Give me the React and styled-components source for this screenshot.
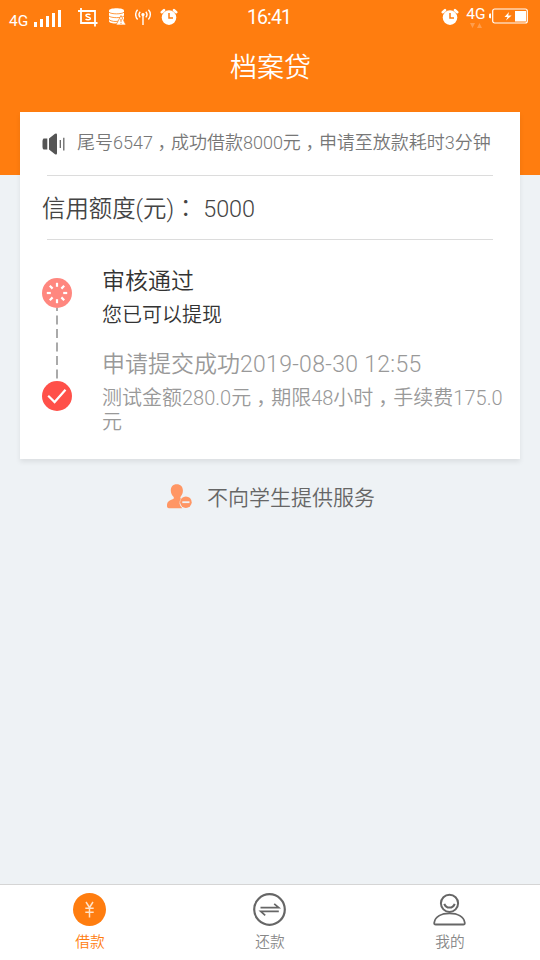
import React from 'react'
import styled, { createGlobalStyle } from 'styled-components'

const GlobalStyle = createGlobalStyle`
  * {
    box-sizing: border-box;
  }
  body {
    margin: 0;
    background: #eef2f5;
    font-family: Roboto, 'Noto Sans CJK SC', sans-serif;
    font-weight: 350;
  }
  svg {
    display: block;
    flex-shrink: 0;
  }
`

const AlarmIcon = () => (
  <svg width='18' height='18' viewBox='0 0 18 18'>
    <circle cx='9' cy='9.6' r='7.3' fill='#fff' />
    <path d='M1.800 4.200 4 2.200M16.200 4.200 14 2.200' stroke='#fff' strokeWidth='2.600' strokeLinecap='round' />
    <path d='M9 5v5h4' fill='none' stroke='#ff7d0f' strokeWidth='1.5' />
  </svg>
)

const SignalIcon = () => (
  <svg width='28' height='18' viewBox='0 0 28 18' fill='#fff'>
    <path d='M0 13h3v5H0zM6 10h3v8H6zM12 7h3v11h-3zM18 4h3v14h-3zM24 1h3v17h-3z' />
  </svg>
)

const CropIcon = () => (
  <svg width='20' height='19' viewBox='0 0 20 19' fill='none' stroke='#fff' strokeWidth='1.8'>
    <path d='M3 0v15H19.500M0 3h17v15.500' />
    <path d='M12.300 6.800c-.7-.8-4.4-1-4.400.7 0 1.900 4.500 1 4.500 3 0 1.700-3.900 1.600-4.800.5' strokeWidth='1.5' />
  </svg>
)

const DatabaseIcon = () => (
  <svg width='17' height='17' viewBox='0 0 17 17'>
    <path d='M0 2.6C0-.6 15-.6 15 2.6v10.6c0 3.2-15 3.2-15 0z' fill='#fff' />
    <path d='M0 4.2c2 2.2 13 2.2 15 0M0 8c2 2.2 13 2.2 15 0M0 11.6c2 2 7 2.2 9 1.6' fill='none' stroke='#ff7d0f' strokeWidth='.8' />
    <path d='M12 7.5 17 17H7z' fill='#fff' stroke='#ff7d0f' strokeWidth='.7' />
    <path d='M12 10.8v3M12 14.8v1' stroke='#ff7d0f' />
  </svg>
)

const AntennaIcon = () => (
  <svg width='17' height='17' viewBox='0 0 17 17' fill='none' stroke='#fff' strokeWidth='1.4'>
    <path d='M8 7v10M5.200 3.800c-1.4 1.600-1.400 4 0 5.600M10.800 3.800c1.400 1.600 1.400 4 0 5.600M2.600 1.800c-2.600 2.600-2.600 7 0 9.600M13.400 1.800c2.600 2.600 2.600 7 0 9.600' />
    <circle cx='8' cy='6.600' r='1' fill='#fff' />
  </svg>
)

const BatteryIcon = () => (
  <svg width='39' height='16' viewBox='0 0 39 16'>
    <rect x='3.700' y='1' width='34.600' height='14' rx='2' fill='none' stroke='#fff' strokeWidth='1.2' />
    <path d='M2 5.4H1.2Q0 5.4 0 6.6V9q0 1.2 1.2 1.2H2z' fill='#fff' />
    <path d='M26 3h11v10.500H26zM20 4l-4.500 5h3L17 12.500l5.600-5.100h-3.400z' fill='#fff' />
  </svg>
)

const SpeakerIcon = () => (
  <svg width='23' height='22' viewBox='0 0 23 22' fill='#555'>
    <path d='M1.500 5.500h3.800v11H1.500q-1-1-1-2.500V8q0-1.500 1-2.500zM7 5.600 13 .8q2-1 2 1v18.400q0 2-2 1l-6-4.800z' />
    <path d='M18.300 7v8M21.800 4.800v12.600' stroke='#666' strokeWidth='1.300' />
  </svg>
)

const LoadingIcon = () => (
  <svg width='30' height='30' viewBox='0 0 30 30'>
    <circle cx='15' cy='15' r='15' fill='#ff877f' />
    <g stroke='#fff' strokeWidth='2.200'>
      {[0, 45, 90, 135, 180, 225, 270, 315].map((angle) => (
        <path key={angle} d='M15 4.800v4' transform={`rotate(${angle} 15 15)`} />
      ))}
    </g>
  </svg>
)

const CheckIcon = () => (
  <svg width='30' height='30' viewBox='0 0 30 30'>
    <circle cx='15' cy='15' r='15' fill='#ff5049' />
    <path d='m6.200 14.700 6.400 6.400L23.500 8.800' fill='none' stroke='#fff' strokeWidth='2.200' />
  </svg>
)

const BlockedUserIcon = () => (
  <svg width='25' height='25' viewBox='0 0 25 25'>
    <path
      d='M9.700.2C5.800.2 3.700 2.800 3.800 6.500c.1 2.700 1 4.800 2.700 6.200.9 1.400.3 2-1.500 2.900-3.500 1.500-5 2.500-5 6.400 0 1.500.6 2 2 2.300h13.400a6.600 6.600 0 0 1-1.500-9.500c-.8-.8-.7-1.600 0-2.500 1.300-1.500 2-3.300 2-5.800C15.900 2.500 13.600.2 9.700.2z'
      fill='#ff9664'
    />
    <circle cx='18.900' cy='18.200' r='5.800' fill='#ff9664' />
    <path d='M15.300 18.200h7.200' stroke='#eef2f5' strokeWidth='1.800' />
  </svg>
)

const LoanIcon = () => (
  <svg width='33' height='33' viewBox='0 0 33 33'>
    <circle cx='16.500' cy='16.500' r='16.500' fill='#ff7d0f' />
    <path d='m13 9 3.500 5.500L20 9M16.500 14.500v10M12.300 15.200h8.400M12.300 19.300h8.400' fill='none' stroke='#ffe3c8' strokeWidth='1.500' />
  </svg>
)

const RepayIcon = () => (
  <svg width='33' height='33' viewBox='0 0 33 33' fill='none' stroke='#666'>
    <circle cx='16.500' cy='16.500' r='15.300' strokeWidth='2.200' />
    <path d='M7.500 14.700h18.300l-4.600-3.900M25.800 18.400H7.700l4.500 4' strokeWidth='1.700' />
  </svg>
)

const MineIcon = () => (
  <svg width='33' height='33' viewBox='0 0 33 33' fill='none' stroke='#666' strokeWidth='2'>
    <circle cx='16.500' cy='10.300' r='8.600' />
    <path d='M11.300 10.800c1.800 5 8.600 5 10.400 0' />
    <path d='M1.200 29.800c1-6.200 7.200-9.400 15.300-9.400s14.300 3.200 15.300 9.400q.2 1.700-1.500 1.700H2.700q-1.700 0-1.500-1.700z' strokeWidth='1.800' />
  </svg>
)

const tabs = [
  { label: '借款', icon: <LoanIcon />, active: true },
  { label: '还款', icon: <RepayIcon /> },
  { label: '我的', icon: <MineIcon /> },
]

const App = () => {
  return (
    <Screen>
      <GlobalStyle />
      <Header>
        <StatusBar>
          <Carrier>
            <span className='network'>4G</span>
            <SignalIcon />
          </Carrier>
          <Notifications>
            <CropIcon />
            <DatabaseIcon />
            <AntennaIcon />
            <AlarmIcon />
          </Notifications>
          <Clock>16:41</Clock>
          <Indicators>
            <AlarmIcon />
            <DataNetwork>
              4G
              <svg width='12' height='5' viewBox='0 0 12 5' fill='#ff9d4d'>
                <path d='M0 0h5L2.500 5zM7 5h5L9.500 0z' />
              </svg>
            </DataNetwork>
            <BatteryIcon />
          </Indicators>
        </StatusBar>
        <Title>档案贷</Title>
      </Header>
      <Card>
        <Notice>
          <SpeakerIcon />
          <span>
            尾号6547<Comma>，</Comma>成功借款8000元<Comma>，</Comma>申请至放款耗时3分钟
          </span>
        </Notice>
        <Credit>
          信用额度(元)<Colon>：</Colon> 5000
        </Credit>
        <Progress>
          <Rail>
            <LoadingIcon />
            <Dashes width='2' height='73' viewBox='0 0 2 73'>
              <path d='M1 0v73' stroke='#aaa' strokeWidth='2' strokeDasharray='9 4.500' strokeDashoffset='6' />
            </Dashes>
            <CheckIcon />
          </Rail>
          <Steps>
            <Step>
              <h3>审核通过</h3>
              <p>您已可以提现</p>
            </Step>
            <Step $muted>
              <h3>
                申请提交成功<time>2019-08-30 12:55</time>
              </h3>
              <p>
                测试金额280.0元<Comma>，</Comma>期限48小时<Comma>，</Comma>手续费175.0元
              </p>
            </Step>
          </Steps>
        </Progress>
      </Card>
      <Restriction>
        <BlockedUserIcon />
        <span>不向学生提供服务</span>
      </Restriction>
      <TabBar>
        {tabs.map(({ label, icon, active }) => {
          return (
            <Tab key={label} $active={active}>
              {icon}
              {label}
            </Tab>
          )
        })}
      </TabBar>
    </Screen>
  )
}

const Screen = styled.div`
  display: flex;
  flex-direction: column;
  width: 540px;
  height: 960px;
  overflow: hidden;
  background: #eef2f5;
`
const Header = styled.header`
  flex: none;
  height: 175px;
  background: #ff7d0f;
  color: #fff;
`
const StatusBar = styled.div`
  display: flex;
  height: 36px;
`
const Carrier = styled.div`
  display: flex;
  align-items: flex-start;
  width: 78px;
  padding: 9px 0 0 9px;
  .network {
    width: 25px;
    padding-top: 4px;
    font-size: 15.5px;
    font-weight: 400;
    line-height: 17px;
  }
`
const Notifications = styled.div`
  display: flex;
  align-items: flex-start;
  gap: 9px;
  width: 169px;
  padding-top: 8px;
  svg:first-child {
    margin-right: 2px;
  }
  svg:last-child {
    margin-left: -1px;
  }
`
const Clock = styled.div`
  width: 194px;
  padding-top: 7px;
  font-size: 19.5px;
  font-weight: 400;
  line-height: 22px;
  letter-spacing: -0.9px;
`
const Indicators = styled.div`
  display: flex;
  align-items: flex-start;
  padding-top: 8px;
`
const DataNetwork = styled.div`
  display: flex;
  flex-direction: column;
  align-items: center;
  width: 20px;
  margin: -3px 3px 0 7px;
  font-size: 15.5px;
  font-weight: 400;
  line-height: 18px;
`
const Title = styled.h1`
  margin: 0;
  padding: 12px 0 0 1px;
  font-size: 27px;
  font-weight: 350;
  line-height: 40px;
  text-align: center;
`
const Card = styled.main`
  flex: none;
  height: 347px;
  margin: -63px 20px 0;
  padding: 0 14px 0 22px;
  background: #fff;
  box-shadow: 0 3px 5px rgba(0, 0, 0, 0.08);
`
const Notice = styled.div`
  display: flex;
  align-items: center;
  gap: 12px;
  height: 63px;
  color: #777;
  font-size: 18px;
  white-space: nowrap;
  > span {
    padding-bottom: 1px;
    line-height: 26px;
  }
`
const Credit = styled.div`
  height: 65px;
  margin: 0 13px 0 5px;
  border: solid #dcdcdc;
  border-width: 1px 0;
  color: #444;
  font-size: 23.4px;
  line-height: 62px;
  text-indent: -5px;
`
/* half-width comma centred in a full-width cell */
const Comma = styled.span`
  padding: 0 0.25em;
  font-feature-settings: 'halt';
`
const Colon = styled.span`
  font-family: 'Noto Sans CJK TC', sans-serif;
`
const Progress = styled.div`
  display: flex;
  gap: 30px;
`
const Rail = styled.div`
  display: flex;
  flex-direction: column;
  align-items: center;
  width: 30px;
  padding-top: 38px;
`
const Dashes = styled.svg`
  margin-right: 1px;
`
const Steps = styled.div`
  flex: 1;
  padding-top: 25px;
`
const Step = styled.section`
  margin-bottom: 21px;
  color: ${({ $muted }) => ($muted ? '#999' : '#333')};
  h3,
  p {
    margin: 0;
    font-weight: 350;
  }
  h3 {
    font-size: 23px;
    line-height: 34px;
  }
  time {
    letter-spacing: 0.3px;
  }
  p {
    padding-top: 4px;
    font-size: 20px;
    line-height: 24px;
  }
`
const Restriction = styled.div`
  display: flex;
  align-items: center;
  justify-content: center;
  gap: 15px;
  height: 36px;
  margin-top: 19px;
  padding-left: 2px;
  color: #666;
  font-size: 21px;
  svg {
    margin-top: 1px;
  }
`
const TabBar = styled.nav`
  display: grid;
  grid-template-columns: repeat(3, 1fr);
  flex: none;
  height: 76px;
  margin-top: auto;
  border-top: 1px solid #d5d5d5;
  background: #fff;
`
const Tab = styled.div`
  display: flex;
  flex-direction: column;
  align-items: center;
  padding-top: 8px;
  gap: 5px;
  color: ${({ $active }) => ($active ? '#ff7d0f' : '#888')};
  font-size: 14.7px;
  line-height: 22px;
  svg {
    margin-right: 1px;
  }
`

export default App
